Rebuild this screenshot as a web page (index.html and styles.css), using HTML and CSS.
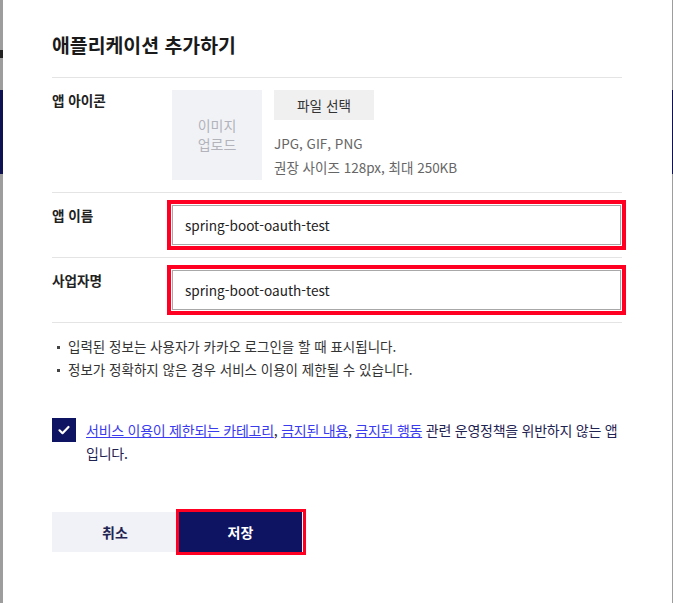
FILE: index.html
```html
<!DOCTYPE html>
<html lang="ko">
<head>
<meta charset="utf-8">
<title>애플리케이션 추가하기</title>
<link rel="stylesheet" href="styles.css">
</head>
<body>
<div class="frame">
  <div class="edge edge-left">
    <span class="edge-mark"></span>
    <span class="edge-navy"></span>
  </div>
  <div class="modal">
    <h1 class="title">애플리케이션 추가하기</h1>
    <div class="row row-icon">
      <div class="label">앱 아이콘</div>
      <div class="icon-field">
        <div class="placeholder">이미지<br>업로드</div>
        <div class="file-info">
          <button class="file-btn" type="button">파일 선택</button>
          <p class="hint">JPG, GIF, PNG</p>
          <p class="hint">권장 사이즈 128px, 최대 250KB</p>
        </div>
      </div>
    </div>
    <div class="row">
      <div class="label">앱 이름</div>
      <div class="input marked">spring-boot-oauth-test</div>
    </div>
    <div class="row">
      <div class="label">사업자명</div>
      <div class="input marked">spring-boot-oauth-test</div>
    </div>
    <ul class="notes">
      <li>입력된 정보는 사용자가 카카오 로그인을 할 때 표시됩니다.</li>
      <li>정보가 정확하지 않은 경우 서비스 이용이 제한될 수 있습니다.</li>
    </ul>
    <div class="agree">
      <span class="checkbox">
        <svg viewBox="0 0 24 24" width="24" height="24"><path d="M7.5 12.3l3 2.9 6-6.2" fill="none" stroke="#fff" stroke-width="2.2" stroke-linecap="round" stroke-linejoin="round"/></svg>
      </span>
      <p class="agree-text"><a href="#">서비스 이용이 제한되는 카테고리</a>, <a href="#">금지된 내용</a>, <a href="#">금지된 행동</a> 관련 운영정책을 위반하지 않는 앱입니다.</p>
    </div>
    <div class="actions">
      <button class="btn btn-cancel" type="button">취소</button>
      <button class="btn btn-save" type="button">저장</button>
    </div>
  </div>
  <div class="edge edge-right">
    <span class="edge-navy"></span>
  </div>
</div>
</body>
</html>
```

FILE: styles.css
```css
* { box-sizing: border-box; }
html, body {
  margin: 0;
  padding: 0;
  background: #fff;
  font-family: "Noto Sans CJK KR", "Noto Sans", sans-serif;
  color: #222;
}
.frame {
  display: flex;
  width: 673px;
  height: 603px;
  overflow: hidden;
}
.edge {
  display: flex;
  flex-direction: column;
  background: #9d9d9d;
}
.edge-left { width: 3px; }
.edge-right { width: 1px; }
.edge-mark {
  display: block;
  height: 8px;
  margin-top: 50px;
  background: #222;
}
.edge-navy {
  display: block;
  height: 84px;
  background: #0e1252;
}
.edge-left .edge-navy { margin-top: 32px; }
.edge-right .edge-navy { margin-top: 90px; }
.modal {
  flex: 1;
  padding: 30px 50px 0 49px;
  background: #fff;
}
.title {
  margin: 0 0 17px;
  font-size: 19.4px;
  line-height: 30px;
  font-weight: 700;
  color: #1a1a1a;
}
.row {
  display: flex;
  border-top: 1px solid #e4e4e4;
  padding: 12px 0 12px;
}
.row-icon { padding-bottom: 12px; }
.label {
  width: 120px;
  flex: none;
  font-size: 13.6px;
  line-height: 20px;
  font-weight: 700;
  color: #222;
}
.icon-field {
  display: flex;
  gap: 12px;
}
.placeholder {
  width: 90px;
  height: 90px;
  background: #f1f2f6;
  color: #b2b3bb;
  font-size: 14px;
  line-height: 19px;
  display: flex;
  align-items: center;
  justify-content: center;
  text-align: center;
}
.file-info {
  display: flex;
  flex-direction: column;
  align-items: flex-start;
}
.file-btn {
  width: 100px;
  height: 30px;
  border: 0;
  background: #f0f0f0;
  font-family: inherit;
  font-size: 13.6px;
  color: #333;
  padding: 0;
  margin-bottom: 11px;
}
.hint {
  margin: 0;
  font-size: 13.5px;
  line-height: 24px;
  color: #666;
}
.input {
  width: 449px;
  height: 40px;
  border: 1px solid #a8a8a8;
  padding: 0 12px;
  font-size: 13.6px;
  line-height: 38px;
  color: #222;
}
.marked {
  outline: 4px solid #ff0022;
  outline-offset: 1px;
}
.notes {
  list-style: none;
  margin: 0;
  padding: 12px 0 0;
  border-top: 1px solid #e4e4e4;
}
.notes li {
  position: relative;
  padding-left: 16px;
  font-size: 13.5px;
  line-height: 23px;
  color: #333;
}
.notes li::before {
  content: "";
  position: absolute;
  left: 5px;
  top: 11px;
  width: 3px;
  height: 3px;
  background: #444;
}
.agree {
  display: flex;
  gap: 10px;
  margin-top: 37px;
}
.checkbox {
  flex: none;
  width: 24px;
  height: 24px;
  background: #0f1462;
  display: flex;
  align-items: center;
  justify-content: center;
}
.checkbox svg { display: block; }
.agree-text {
  margin: 1px 0 0 0;
  font-size: 14px;
  line-height: 23px;
  letter-spacing: -0.25px;
  color: #1f2352;
}
.agree-text a {
  color: #3a3aee;
  text-decoration: underline;
}
.actions {
  display: flex;
  gap: 1px;
  margin-top: 47px;
}
.btn {
  width: 126px;
  height: 40px;
  border: 0;
  font-family: inherit;
  font-size: 14px;
  font-weight: 700;
  padding: 0;
}
.btn-cancel {
  background: #f1f2f7;
  color: #1f2352;
}
.btn-save {
  width: 124px;
  background: #0e1461;
  color: #fff;
  border-right: 1px solid #fff;
  outline: 3px solid #ff0022;
  outline-offset: 0;
}
```
